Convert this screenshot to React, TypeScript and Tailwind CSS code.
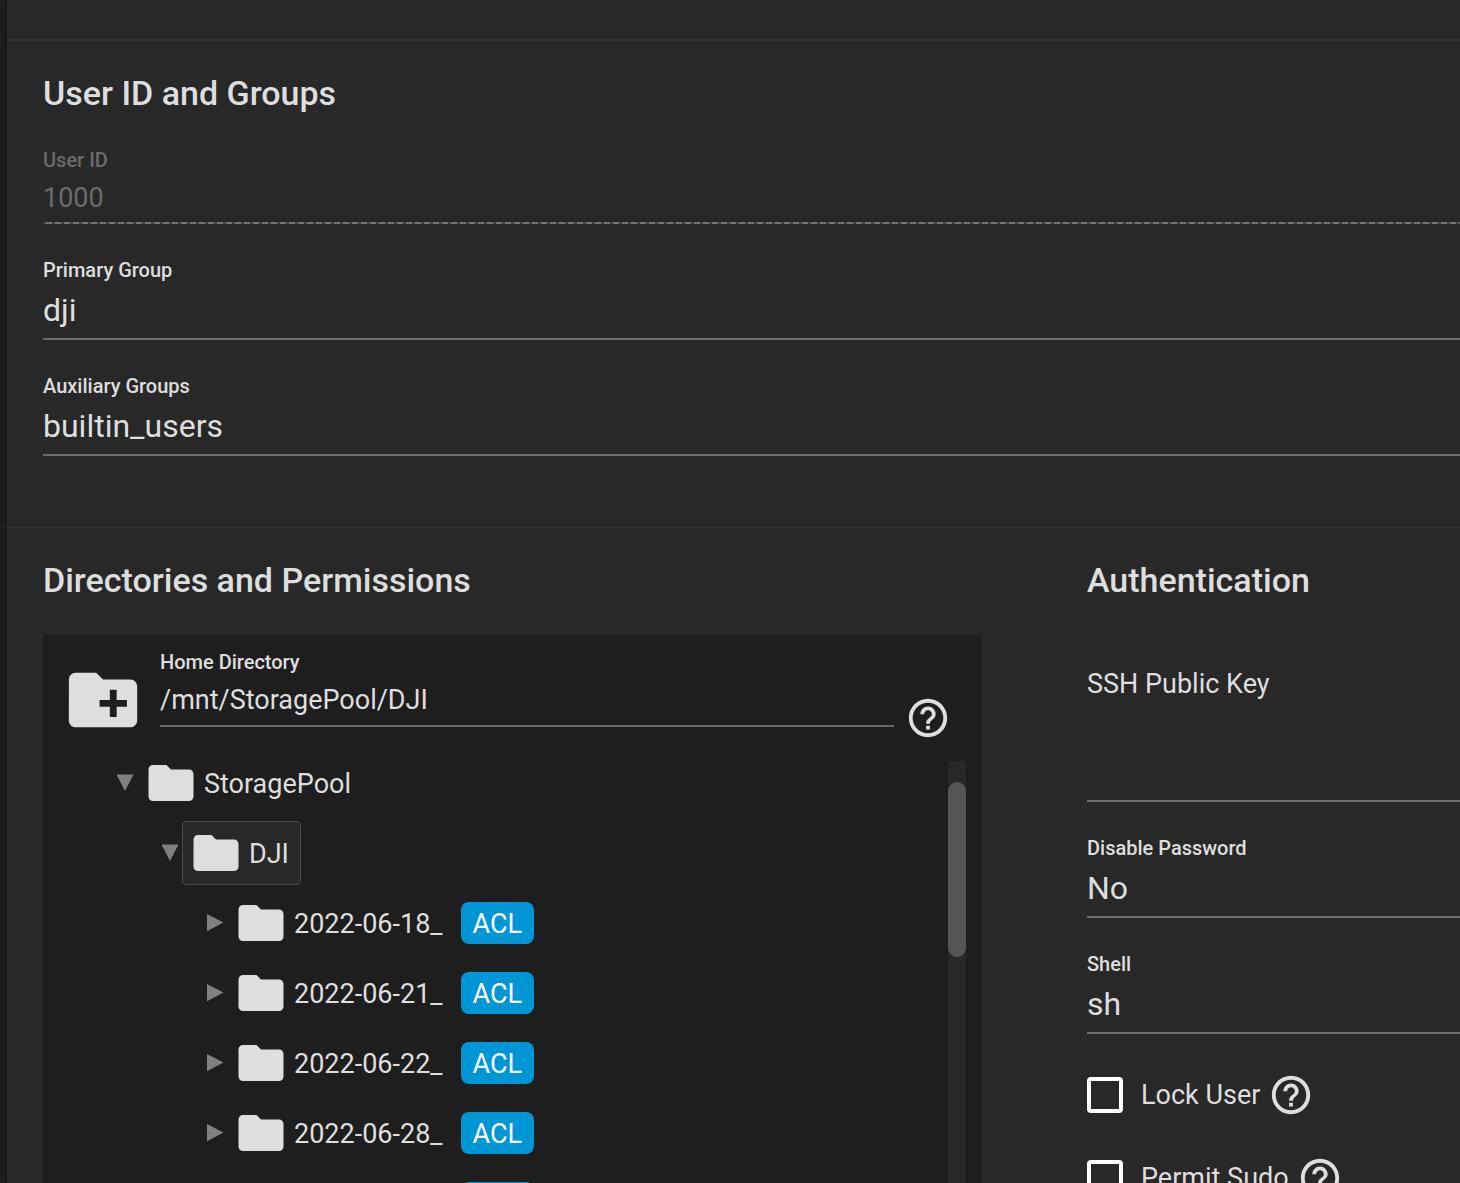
import { ReactNode, useId, useState } from "react";
import { MdCreateNewFolder, MdFolder, MdHelpOutline } from "react-icons/md";

const FOLDERS = ["2022-06-18_", "2022-06-21_", "2022-06-22_", "2022-06-28_", "2022-06-29_"];

function SectionTitle({ children }: { children: ReactNode }) {
  return <h2 className="text-[34px] leading-10 font-medium whitespace-nowrap">{children}</h2>;
}

function HelpButton({ label }: { label: string }) {
  return (
    <button type="button" aria-label={label} className="shrink-0">
      <MdHelpOutline className="size-[46px]" />
    </button>
  );
}

function SelectField({ label, options }: { label: string; options: string[] }) {
  const id = useId();
  return (
    <div className="flex flex-col border-b-2 border-[#6b6b6b] pb-2">
      <label htmlFor={id} className="text-xl leading-6 font-medium mb-2">
        {label}
      </label>
      <select id={id} className="appearance-none w-full h-10 text-[32px] leading-10 outline-none">
        {options.map((option) => (
          <option key={option}>{option}</option>
        ))}
      </select>
    </div>
  );
}

function CheckboxField({ label }: { label: string }) {
  const id = useId();
  return (
    <div className="flex items-center">
      <input
        id={id}
        type="checkbox"
        className="appearance-none size-9 shrink-0 rounded border-4 border-white checked:bg-[#0095d5]"
      />
      <label htmlFor={id} className="ml-[18px] mr-2 text-[27px] leading-8 whitespace-nowrap">
        {label}
      </label>
      <HelpButton label={`About ${label}`} />
    </div>
  );
}

function Toggle({ open, onClick }: { open: boolean; onClick?: () => void }) {
  return (
    <button type="button" aria-label={open ? "Collapse" : "Expand"} onClick={onClick} className="text-[#808080]">
      <svg viewBox="0 0 18 18" className="size-[18px]" fill="currentColor">
        {open ? <path d="M-.5 .5h17L8 17z" /> : <path d="M0 0v17.2L16.5 8.6z" />}
      </svg>
    </button>
  );
}

function TreeNode({
  name,
  acl,
  selected,
  children,
}: {
  name: string;
  acl?: boolean;
  selected?: boolean;
  children?: ReactNode;
}) {
  const [open, setOpen] = useState(Boolean(children));
  return (
    <li>
      <div className="flex items-center gap-0.5 h-[70px]">
        <Toggle open={open} onClick={() => setOpen(!open)} />
        <button
          type="button"
          className={
            selected
              ? "flex items-center gap-1.5 h-16 pl-1.5 pr-[11px] rounded border border-[#4a4a4a] bg-[#282828]"
              : "flex items-center gap-1.5 h-16 pl-1.5 pr-[11px] rounded border border-transparent"
          }
        >
          <MdFolder className="size-[54px]" />
          <span className="text-[27px] leading-8 pt-0.5 whitespace-nowrap">{name}</span>
        </button>
        {acl && (
          <span className="ml-1 h-[42px] px-3 rounded-lg bg-[#0095d5] text-white text-[27px] leading-[44px]">ACL</span>
        )}
      </div>
      {open && children && <ul className="pl-[45px]">{children}</ul>}
    </li>
  );
}

function HomeDirectory() {
  return (
    <div className="mt-[35px] flex-1 flex flex-col min-h-0 bg-[#1e1e1e] pt-[15px]">
      <div className="flex items-end pl-[19px] pr-[31px]">
        <button type="button" aria-label="Create folder" className="shrink-0">
          <MdCreateNewFolder className="size-[82px]" />
        </button>
        <div className="flex-1 flex flex-col ml-4 mr-[11px] mb-3.5 pb-[7px] border-b-2 border-[#6b6b6b]">
          <label htmlFor="home" className="text-xl leading-6 font-medium mb-2">
            Home Directory
          </label>
          <input
            id="home"
            defaultValue="/mnt/StoragePool/DJI"
            className="w-full h-9 text-[27px] leading-9 outline-none"
          />
        </div>
        <HelpButton label="About Home Directory" />
      </div>
      <div className="flex-1 flex min-h-0 mt-[7px] pr-4 pl-[74px]">
        <ul className="flex-1 min-h-0 overflow-hidden">
          <TreeNode name="StoragePool">
            <TreeNode name="DJI" selected>
              {FOLDERS.map((name) => (
                <TreeNode key={name} name={name} acl />
              ))}
            </TreeNode>
          </TreeNode>
        </ul>
        <div className="w-[18px] mt-[13px] pt-[21px] bg-[#282828]">
          <div className="h-[175px] rounded-full bg-[#555555]" />
        </div>
      </div>
    </div>
  );
}

export default function App() {
  return (
    <div className="h-screen overflow-hidden bg-[#1e1e1e] pl-[7px] font-[Roboto,sans-serif] text-[#dedede]">
      <main className="h-full flex flex-col bg-[#282828] shadow-[0_0_5px_rgba(0,0,0,0.4)]">
        <div className="h-[39px] shrink-0" />

        <section className="shrink-0 border-t-2 border-[#323232] pl-9 pt-8 pb-[70px]">
          <SectionTitle>User ID and Groups</SectionTitle>
          <div className="flex flex-col gap-[34px] mt-[35px]">
            <div className="flex flex-col text-[#6c6c6c]">
              <label htmlFor="uid" className="text-xl leading-6 font-medium mb-2">
                User ID
              </label>
              <input id="uid" disabled defaultValue="1000" className="w-full h-9 mb-1.5 text-[27px] leading-9" />
              <div className="h-0.5 bg-[repeating-linear-gradient(90deg,#444444_0_3px,#747474_3px_9px)]" />
            </div>
            <SelectField label="Primary Group" options={["dji"]} />
            <SelectField label="Auxiliary Groups" options={["builtin_users"]} />
          </div>
        </section>

        <section className="flex-1 min-h-0 grid grid-cols-[minmax(0,939fr)_minmax(0,373fr)] grid-rows-[minmax(0,1fr)] gap-[105px] border-t-2 border-[#323232] pl-9 pt-8">
          <div className="flex flex-col min-h-0">
            <SectionTitle>Directories and Permissions</SectionTitle>
            <HomeDirectory />
          </div>
          <div className="min-h-0">
            <SectionTitle>Authentication</SectionTitle>
            <div className="flex flex-col gap-[34px] mt-[68px]">
              <div className="flex flex-col border-b-2 border-[#6b6b6b]">
                <label htmlFor="ssh" className="text-[27px] leading-8">
                  SSH Public Key
                </label>
                <textarea id="ssh" className="w-full h-[100px] resize-none text-[27px] outline-none" />
              </div>
              <SelectField label="Disable Password" options={["No", "Yes"]} />
              <SelectField label="Shell" options={["sh", "bash", "zsh"]} />
            </div>
            <div className="flex flex-col gap-[37px] mt-[38px]">
              <CheckboxField label="Lock User" />
              <CheckboxField label="Permit Sudo" />
            </div>
          </div>
        </section>
      </main>
    </div>
  );
}
